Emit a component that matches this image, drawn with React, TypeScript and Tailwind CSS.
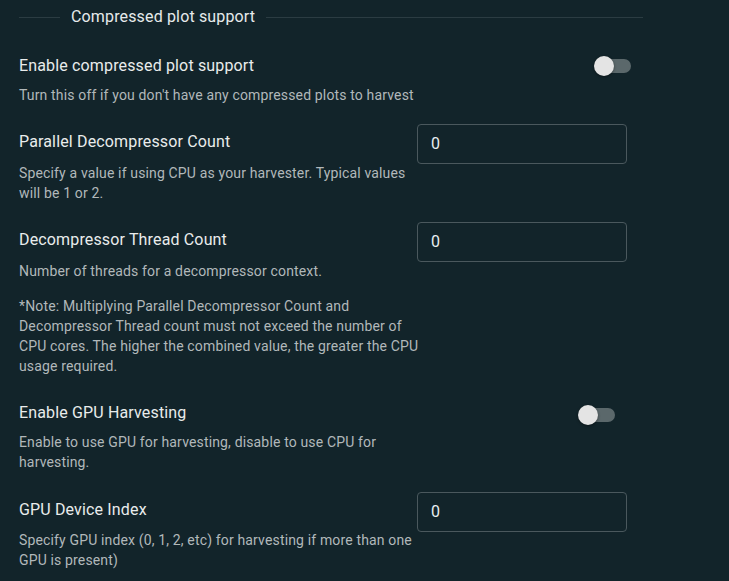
const font = { fontFamily: "Roboto, 'Noto Sans', sans-serif" };

function Toggle() {
  return (
    <div className="relative h-[38px] w-[58px] shrink-0">
      <div className="absolute left-[12px] top-[12px] h-[14px] w-[34px] rounded-full bg-[#5b686b]" />
      <div className="absolute left-[9px] top-[9px] size-[20px] rounded-full bg-[#e4e4e4] shadow-[0_1px_3px_rgba(0,0,0,0.4)]" />
    </div>
  );
}

function NumberInput({ value }: { value: string }) {
  return (
    <div className="flex h-[40px] w-[210px] shrink-0 items-center rounded-[4px] border border-[#4a585d] px-[13px] text-base tracking-[0.15px] text-[#e8eef0]">
      {value}
    </div>
  );
}

function Title({ children }: { children: React.ReactNode }) {
  return (
    <div className="text-base leading-6 tracking-[0.15px] text-[#e9ecec]">{children}</div>
  );
}

function Desc({ children, className = "" }: { children: React.ReactNode; className?: string }) {
  return (
    <p className={"w-[402px] text-sm leading-5 tracking-[0.15px] text-[#b1b8ba] " + className}>
      {children}
    </p>
  );
}

export default function App() {
  return (
    <div className="min-h-[581px] w-full bg-[#12242a] pl-[19px]" style={font}>
      <div className="flex w-[624px] items-center pt-[5px]">
        <div className="h-px w-[41px] bg-[#2b3c42]" />
        <span className="px-[11px] text-base leading-6 tracking-[0.15px] text-[#e6eaeb]">
          Compressed plot support
        </span>
        <div className="h-px flex-1 bg-[#2b3c42]" />
      </div>

      <div className="mt-[18px] flex h-[38px] w-[624px] items-center justify-between">
        <Title>Enable compressed plot support</Title>
        <Toggle />
      </div>
      <Desc>Turn this off if you don't have any compressed plots to harvest</Desc>

      <div className="mt-[19px] flex w-[608px] items-center">
        <div className="w-[398px] pb-[5px]">
          <Title>Parallel Decompressor Count</Title>
        </div>
        <NumberInput value="0" />
      </div>
      <Desc className="-mt-px">
        Specify a value if using CPU as your harvester. Typical values will be 1 or 2.
      </Desc>

      <div className="mt-[19px] flex w-[608px] items-center">
        <div className="w-[398px] pb-[5px]">
          <Title>Decompressor Thread Count</Title>
        </div>
        <NumberInput value="0" />
      </div>
      <Desc className="-mt-px">Number of threads for a decompressor context.</Desc>
      <Desc className="mt-[15px]">
        *Note: Multiplying Parallel Decompressor Count and Decompressor Thread count must not
        exceed the number of CPU cores. The higher the combined value, the greater the CPU usage
        required.
      </Desc>

      <div className="mt-[18px] flex h-[38px] w-[608px] items-center justify-between">
        <Title>Enable GPU Harvesting</Title>
        <div className="mt-[4px]">
          <Toggle />
        </div>
      </div>
      <Desc>Enable to use GPU for harvesting, disable to use CPU for harvesting.</Desc>

      <div className="mt-[20px] flex w-[608px] items-center">
        <div className="w-[398px] pb-[5px]">
          <Title>GPU Device Index</Title>
        </div>
        <NumberInput value="0" />
      </div>
      <Desc className="-mt-[2px]">
        Specify GPU index (0, 1, 2, etc) for harvesting if more than one GPU is present)
      </Desc>
    </div>
  );
}
